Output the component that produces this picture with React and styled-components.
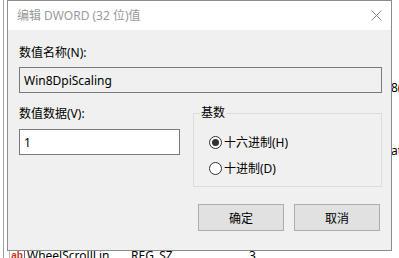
import React from "react";
import styled, { createGlobalStyle } from "styled-components";

const GlobalStyle = createGlobalStyle`
  html, body { margin: 0; padding: 0; background: #fff; overflow: hidden; }
  body {
    font-family: "Segoe UI", "Noto Sans", "Noto Sans CJK SC", sans-serif;
    font-size: 12px;
    color: #000;
  }
`;

const Desktop = styled.div`
  position: relative;
  width: 399px;
  height: 258px;
  overflow: hidden;
  background: #fff;
`;

/* registry list behind the dialog */
const ListView = styled.div`
  box-sizing: border-box;
  height: 258px;
  margin-left: 3px;
  border-left: 1px solid #a0a0a0;
  padding-top: 14px;
  display: flex;
  flex-direction: column;
  overflow: hidden;
`;

const ListRow = styled.div`
  flex: none;
  display: grid;
  grid-template-columns: 5px 18px 104px 118px 142px auto;
  height: 21px;
  align-items: center;
  white-space: nowrap;
  color: #000;
`;

const Cell = styled.span`
  overflow: hidden;
  white-space: nowrap;
  line-height: 16px;
`;

const StringIcon = styled.span`
  box-sizing: border-box;
  width: 16px;
  height: 13px;
  display: flex;
  align-items: center;
  justify-content: center;
  font-family: "Liberation Sans", sans-serif;
  font-size: 10px;
  font-weight: bold;
  line-height: 1;
  color: #c8341c;
  border: 1px solid #b9b9b9;
  border-right-color: #666;
  background: #fff;
`;

/* dialog window */
const Window = styled.section`
  position: absolute;
  left: 7px;
  top: 0;
  width: 385px;
  height: 251px;
  box-sizing: border-box;
  border: 1px solid #8c8c8c;
  background: #f0f0f0;
  display: flex;
  flex-direction: column;
`;

const TitleBar = styled.header`
  height: 29px;
  flex: none;
  background: #fff;
  display: flex;
  align-items: center;
  justify-content: space-between;
  padding-left: 9px;
`;

const Title = styled.h1`
  margin: 0;
  font-size: 12px;
  font-weight: normal;
  color: #9a9a9a;
  line-height: 16px;
`;

const CloseButton = styled.button`
  width: 30px;
  height: 29px;
  border: 0;
  padding: 0;
  background: transparent;
  display: flex;
  align-items: center;
  justify-content: center;
`;

const Body = styled.div`
  flex: 1;
  display: flex;
  flex-direction: column;
  padding: 15px 9px 0 11px;
`;

const FieldLabel = styled.label`
  display: block;
  line-height: 16px;
  height: 16px;
`;

const TextBox = styled.input`
  box-sizing: border-box;
  display: block;
  margin: ${(p) => p.$gap}px 0 0;
  width: ${(p) => (p.$width ? `${p.$width}px` : "100%")};
  height: 26px;
  border: 1px solid #7a7a7a;
  background: ${(p) => (p.readOnly ? "#f0f0f0" : "#fff")};
  padding: 0 4px;
  font: inherit;
  color: #000;
  outline: none;
`;

const DataRow = styled.div`
  display: flex;
  gap: 13px;
  margin-top: 13px;
`;

const DataColumn = styled.div`
  width: 161px;
  display: flex;
  flex-direction: column;
`;

const GroupBox = styled.fieldset`
  box-sizing: border-box;
  margin: 0;
  width: 189px;
  height: 81px;
  padding: 0;
  min-width: 0;
  border: 1px solid #dcdcdc;
`;

const GroupTitle = styled.legend`
  margin-left: 6px;
  padding: 0 1px;
  line-height: 14px;
  font-size: 12px;
`;

const RadioList = styled.div`
  display: flex;
  flex-direction: column;
  gap: 6px;
  padding: 12px 0 0 15px;
`;

const RadioRow = styled.label`
  display: flex;
  align-items: center;
  gap: 2px;
  height: 20px;
`;

const Radio = styled.input`
  appearance: none;
  margin: 0;
  box-sizing: border-box;
  width: 13px;
  height: 13px;
  border: 1px solid #333;
  border-radius: 50%;
  background: #fff;
  display: grid;
  place-items: center;
  &:checked::after {
    content: "";
    width: 7px;
    height: 7px;
    border-radius: 50%;
    background: #333;
  }
`;

const ButtonRow = styled.div`
  display: flex;
  justify-content: flex-end;
  gap: 10px;
  margin-top: 17px;
  padding-right: 2px;
`;

const PushButton = styled.button`
  width: 86px;
  height: 27px;
  box-sizing: border-box;
  border: 1px solid #adadad;
  background: #e1e1e1;
  font: inherit;
  color: #000;
  padding: 0;
`;

/* only the parts of the list that are not under the dialog carry text */
const rows = [
  {}, {}, {},
  { extra: "8(" },
  {}, {},
  { extra: "at" },
  {}, {}, {}, {},
  { name: "WheelScrollLin", type: "REG_SZ", data: "3", icon: true },
];

export default function App() {
  return (
    <Desktop>
      <GlobalStyle />
      <ListView>
        {rows.map((r, i) => (
          <ListRow key={i}>
            <span />
            {r.icon ? <StringIcon>ab</StringIcon> : <span />}
            <Cell>{r.name}</Cell>
            <Cell>{r.type}</Cell>
            <Cell>{r.data}</Cell>
            <Cell>{r.extra}</Cell>
          </ListRow>
        ))}
      </ListView>

      <Window>
        <TitleBar>
          <Title>编辑 DWORD (32 位)值</Title>
          <CloseButton aria-label="关闭">
            <svg width="11" height="11" viewBox="0 0 11 11">
              <path d="M0.5 0.5 L10.5 10.5 M10.5 0.5 L0.5 10.5" stroke="#8a8a8a" strokeWidth="1" fill="none" />
            </svg>
          </CloseButton>
        </TitleBar>
        <Body>
          <FieldLabel htmlFor="vname">数值名称(N):</FieldLabel>
          <TextBox id="vname" $gap={6} readOnly defaultValue="Win8DpiScaling" />
          <DataRow>
            <DataColumn>
              <FieldLabel htmlFor="vdata">数值数据(V):</FieldLabel>
              <TextBox id="vdata" $gap={7} $width={161} defaultValue="1" />
            </DataColumn>
            <GroupBox>
              <GroupTitle>基数</GroupTitle>
              <RadioList>
                <RadioRow>
                  <Radio type="radio" name="base" defaultChecked />
                  十六进制(H)
                </RadioRow>
                <RadioRow>
                  <Radio type="radio" name="base" />
                  十进制(D)
                </RadioRow>
              </RadioList>
            </GroupBox>
          </DataRow>
          <ButtonRow>
            <PushButton>确定</PushButton>
            <PushButton>取消</PushButton>
          </ButtonRow>
        </Body>
      </Window>
    </Desktop>
  );
}
